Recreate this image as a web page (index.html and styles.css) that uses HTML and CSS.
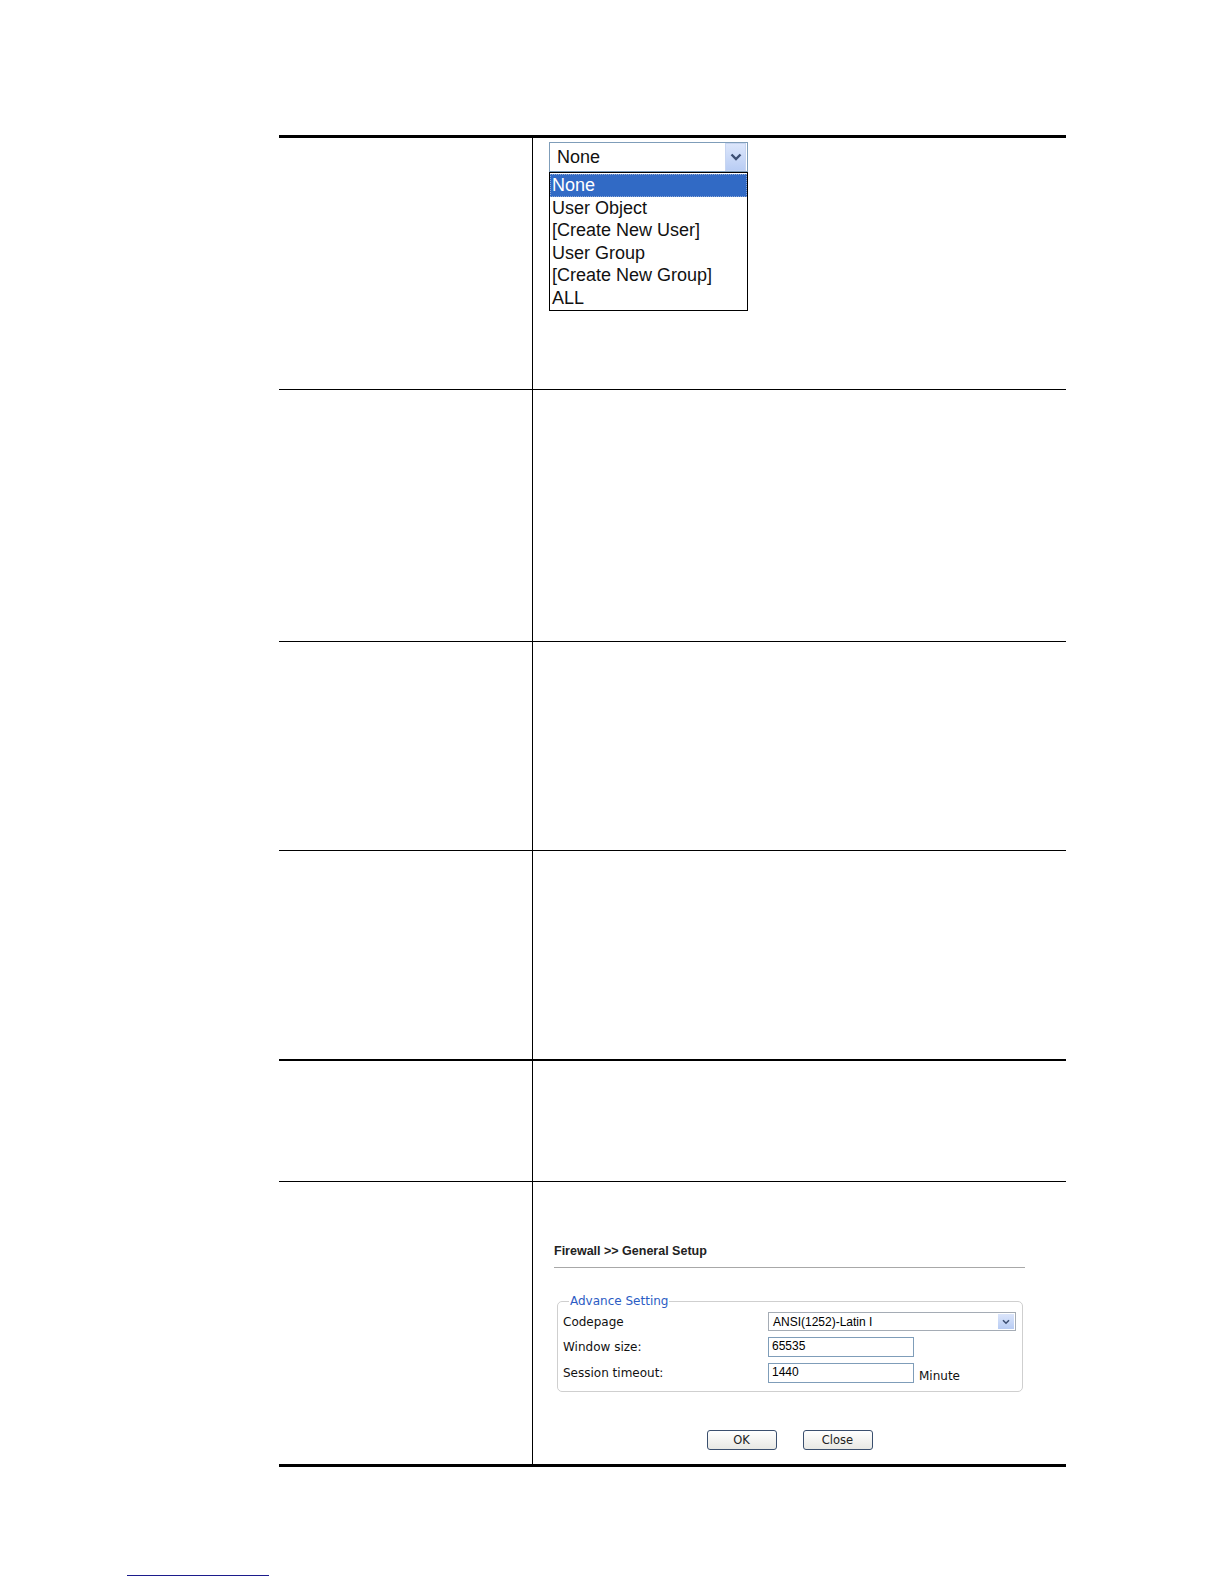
FILE: index.html
```html
<!DOCTYPE html>
<html>
<head>
<meta charset="utf-8">
<link rel="stylesheet" href="styles.css">
</head>
<body>
<div class="page">
  <div class="table">
    <div class="row r1">
      <div class="cell left"></div>
      <div class="cell right">
        <div class="combo">
          <div class="combo-box">
            <span class="combo-value">None</span>
            <span class="combo-btn">
              <svg width="12" height="8" viewBox="0 0 12 8"><path d="M1.5 1.5 L6 6 L10.5 1.5" fill="none" stroke="#3d4f73" stroke-width="2.4"/></svg>
            </span>
          </div>
          <ul class="combo-list">
            <li class="sel">None</li>
            <li>User Object</li>
            <li>[Create New User]</li>
            <li>User Group</li>
            <li>[Create New Group]</li>
            <li>ALL</li>
          </ul>
        </div>
      </div>
    </div>
    <div class="row r2"><div class="cell left"></div><div class="cell right"></div></div>
    <div class="row r3"><div class="cell left"></div><div class="cell right"></div></div>
    <div class="row r4"><div class="cell left"></div><div class="cell right"></div></div>
    <div class="row r5"><div class="cell left"></div><div class="cell right"></div></div>
    <div class="row r6">
      <div class="cell left"></div>
      <div class="cell right panel-cell">
        <div class="panel">
          <div class="panel-title">Firewall &gt;&gt; General Setup</div>
          <fieldset class="adv">
            <legend>Advance Setting</legend>
            <div class="form">
              <div class="lbl">Codepage</div>
              <div class="sel-box"><span class="sel-val">ANSI(1252)-Latin I</span><span class="sel-btn"><svg width="8" height="6" viewBox="0 0 8 6"><path d="M1 1.2 L4 4.2 L7 1.2" fill="none" stroke="#3d4f73" stroke-width="1.6"/></svg></span></div>
              <div class="lbl">Window size:</div>
              <div class="inp">65535</div>
              <div></div>
              <div class="lbl">Session timeout:</div>
              <div class="inp">1440</div>
              <div class="unit">Minute</div>
            </div>
          </fieldset>
          <div class="buttons">
            <span class="btn">OK</span>
            <span class="btn">Close</span>
          </div>
        </div>
      </div>
    </div>
  </div>
  <div class="foot-line"></div>
</div>
</body>
</html>
```

FILE: styles.css
```css
html, body {
  margin: 0;
  padding: 0;
  background: #ffffff;
}
.page {
  width: 1224px;
  height: 1584px;
  position: relative;
  padding-top: 135px;
  padding-left: 279px;
  box-sizing: border-box;
  font-family: "Liberation Sans", Arial, sans-serif;
}
.table {
  width: 787px;
  border-top: 3px solid #000;
  border-bottom: 3px solid #000;
}
.row {
  display: flex;
  border-bottom: 1px solid #000;
}
.row.r6 { border-bottom: none; }
.row.r4 { border-bottom-width: 2px; }
.r1 { height: 251px; }
.r2 { height: 251px; }
.r3 { height: 208px; }
.r4 { height: 208px; }
.r5 { height: 120px; }
.r6 { height: 282px; }
.cell.left {
  width: 253px;
  flex: none;
  border-right: 1px solid #000;
}
.cell.right {
  flex: 1;
  position: relative;
}
/* dropdown */
.combo {
  margin: 4px 0 0 16px;
  width: 199px;
}
.combo-box {
  height: 30px;
  border: 1px solid #7f9db9;
  box-sizing: border-box;
  display: flex;
  align-items: center;
  justify-content: space-between;
  padding: 1px;
}
.combo-value {
  font-size: 18px;
  padding-left: 6px;
  color: #111;
}
.combo-btn {
  width: 21px;
  height: 28px;
  box-sizing: border-box;
  background: linear-gradient(#dce6fb, #b9cdf4);
  border: 1px solid #c7d5f1;
  display: flex;
  align-items: center;
  justify-content: center;
}
.combo-list {
  list-style: none;
  margin: 0;
  padding: 1px 0;
  border: 1px solid #000;
  box-sizing: border-box;
  height: 139px;
}
.combo-list li {
  font-size: 18px;
  line-height: 22.5px;
  height: 22.5px;
  padding-left: 2px;
  color: #111;
  white-space: nowrap;
  box-sizing: border-box;
}
.combo-list li.sel {
  background: #316ac5;
  color: #fff;
  outline: 1px dotted #8fa9d6;
  outline-offset: -1px;
}
/* panel */
.panel-cell {
  padding: 0 41px 0 21px;
}
.panel {
  padding-top: 62px;
}
.panel-title {
  font-family: "Liberation Sans", Arial, sans-serif;
  font-weight: bold;
  font-size: 12.5px;
  line-height: 15px;
  color: #222;
  padding-bottom: 8px;
  border-bottom: 1px solid #a8a8a8;
}
.adv {
  margin: 26px 2px 0 3px;
  border: 1px solid #cfcfcf;
  border-radius: 5px;
  padding: 0 6px 8px 5px;
  font-family: "DejaVu Sans", Verdana, sans-serif;
  font-size: 12px;
}
.adv legend {
  color: #2b5cc4;
  padding: 0 1px;
  margin-left: 6px;
  line-height: 15px;
}
.form {
  display: grid;
  grid-template-columns: 205px 146px 1fr;
  row-gap: 6px;
  align-items: center;
  margin-top: 3px;
  color: #111;
}
.sel-box {
  grid-column: 2 / 4;
  height: 19px;
  border: 1px solid #a5acb5;
  box-sizing: border-box;
  display: flex;
  justify-content: space-between;
  align-items: center;
  padding: 1px;
}
.sel-val, .inp {
  font-family: "Liberation Sans", Arial, sans-serif;
  font-size: 12px;
  color: #000;
}
.sel-val { padding-left: 3px; }
.sel-btn {
  width: 16px;
  height: 15px;
  background: linear-gradient(#dbe5fb, #b8ccf3);
  display: flex;
  align-items: center;
  justify-content: center;
}
.inp {
  height: 20px;
  border: 1px solid #7f9db9;
  box-sizing: border-box;
  padding-left: 3px;
  line-height: 17px;
}
.unit {
  padding-left: 5px;
  padding-top: 6px;
}
.buttons {
  display: flex;
  justify-content: center;
  gap: 26px;
  margin-top: 38px;
}
.btn {
  width: 70px;
  height: 20px;
  box-sizing: border-box;
  border: 1px solid #3a4f6e;
  border-radius: 3px;
  background: linear-gradient(#ffffff, #e8e8e4);
  font-family: "DejaVu Sans", Verdana, sans-serif;
  font-size: 11.5px;
  color: #222;
  display: flex;
  align-items: center;
  justify-content: center;
}
.foot-line {
  position: absolute;
  left: 127px;
  top: 1575px;
  width: 142px;
  height: 1px;
  background: #1c1c8c;
}
```
